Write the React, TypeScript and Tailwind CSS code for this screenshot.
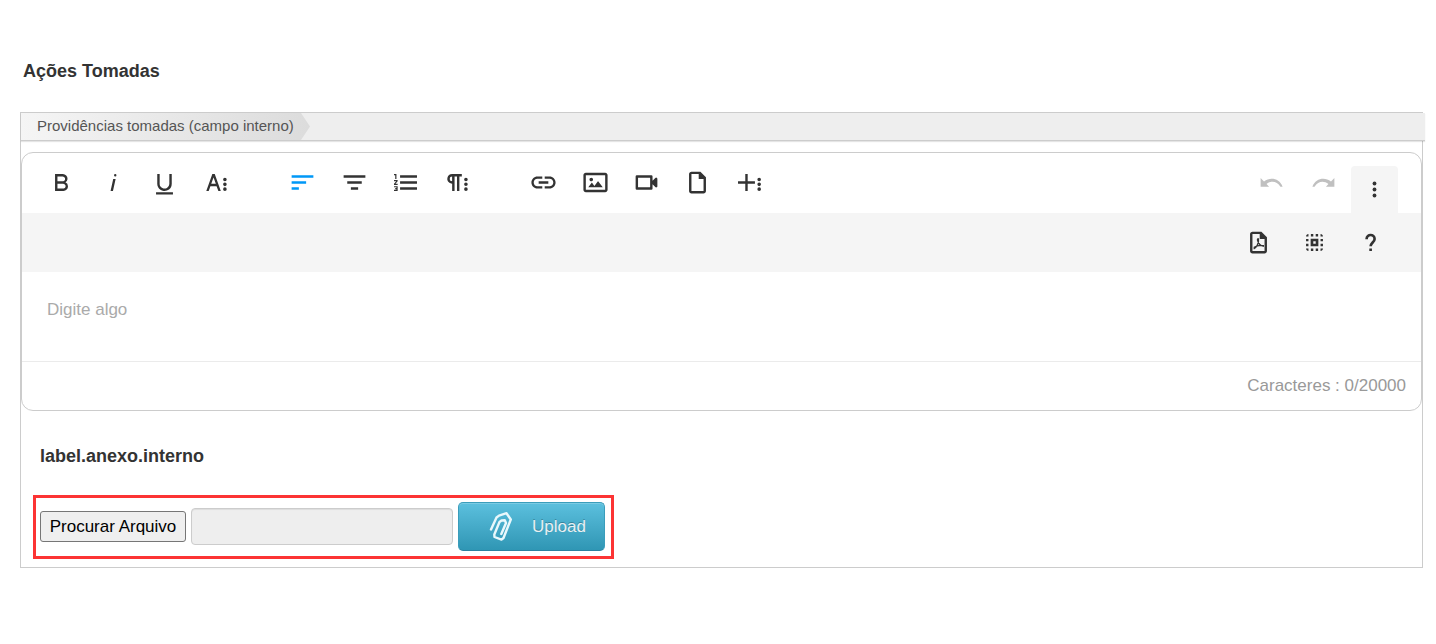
import type { ReactNode } from "react";

interface Tool {
  name: string;
  path: string;
  active?: boolean;
}

const TEXT_TOOLS: Tool[] = [
  { name: "Negrito", path: "M15.25,11.8h0A3.68,3.68,0,0,0,17,9a3.93,3.93,0,0,0-3.86-4H6.65V19h7a3.74,3.74,0,0,0,3.7-3.78V15.1A3.64,3.64,0,0,0,15.25,11.8ZM8.65,7h4.2a2.09,2.09,0,0,1,2,1.3,2.09,2.09,0,0,1-1.37,2.61,2.23,2.23,0,0,1-.63.09H8.65Zm4.6,10H8.65V13h4.6a2.09,2.09,0,0,1,2,1.3,2.09,2.09,0,0,1-1.37,2.61A2.23,2.23,0,0,1,13.25,17Z" },
  { name: "Itálico", path: "M11.76,9h2l-2.2,10h-2Zm1.68-4a1,1,0,1,0,1,1,1,1,0,0,0-1-1Z" },
  { name: "Sublinhado", path: "M19,20v2H5V20Zm-3-6.785a4,4,0,0,1-5.74,3.4A3.75,3.75,0,0,1,8,13.085V5.005H6v8.21a6,6,0,0,0,8,5.44,5.851,5.851,0,0,0,4-5.65v-8H16Z" },
  { name: "Mais texto", path: "M13.55,19h2l-5-14h-2l-5,14h2l1.4-4h5.1Zm-5.9-6,1.9-5.2,1.9,5.2Zm12.8,4.5a1.5,1.5,0,1,1-1.5-1.5A1.5,1.5,0,0,1,20.45,17.5Zm0-4a1.5,1.5,0,1,1-1.5-1.5A1.5,1.5,0,0,1,20.45,13.5Zm0-4A1.5,1.5,0,1,1,18.95,8,1.5,1.5,0,0,1,20.45,9.5Z" },
];

const PARAGRAPH_TOOLS: Tool[] = [
  { name: "Alinhar à esquerda", path: "M3,18h6v-2H3ZM3,6v2h18V6ZM3,13h12v-2H3Z", active: true },
  { name: "Centralizar", path: "M9,18h6v-2H9ZM6,13h12v-2H6ZM3,6v2h18V6Z" },
  { name: "Lista numerada", path: "M2.5,16h2v.5h-1v1h1V18h-2v1h3V15h-3Zm1-7h1V5h-2V6h1Zm-1,2H4.3L2.5,13.1V14h3V13H3.7l1.8-2.1V10h-3Zm5-5V8h14V6Zm0,12h14V16H7.5Zm0-5h14V11H7.5Z" },
  { name: "Mais parágrafo", path: "M7.682,5a4.11,4.11,0,0,0-4.07,3.18,4,4,0,0,0,3.11,4.725h0l.027.005a3.766,3.766,0,0,0,.82.09v6h2V7h2V19h2V7h2V5ZM5.532,9a2,2,0,0,1,2-2v4A2,2,0,0,1,5.532,9Zm14.94,8.491a1.5,1.5,0,1,1-1.5-1.5A1.5,1.5,0,0,1,20.472,17.491Zm0-4a1.5,1.5,0,1,1-1.5-1.5A1.5,1.5,0,0,1,20.472,13.491Zm0-4a1.5,1.5,0,1,1-1.5-1.5A1.5,1.5,0,0,1,20.472,9.491Z" },
];

const INSERT_TOOLS: Tool[] = [
  { name: "Inserir link", path: "M3.9 12c0-1.71 1.39-3.1 3.1-3.1h4V7H7c-2.76 0-5 2.24-5 5s2.24 5 5 5h4v-1.9H7c-1.71 0-3.1-1.39-3.1-3.1zM8 13h8v-2H8v2zm9-6h-4v1.9h4c1.71 0 3.1 1.39 3.1 3.1s-1.39 3.1-3.1 3.1h-4V17h4c2.76 0 5-2.24 5-5s-2.24-5-5-5z" },
  { name: "Inserir imagem", path: "M14.2,11l3.8,5H6l3-3.9l2.1,2.7L14,11H14.2z M8.5,11c0.8,0,1.5-0.7,1.5-1.5S9.3,8,8.5,8S7,8.7,7,9.5C7,10.3,7.7,11,8.5,11z M22,6v12c0,1.1-0.9,2-2,2H4c-1.1,0-2-0.9-2-2V6c0-1.1,0.9-2,2-2h16C21.1,4,22,4.9,22,6z M20,8.8V6H4v12h16V8.8z" },
  { name: "Inserir vídeo", path: "M15,8v8H5V8H15m2,2.5V7a1,1,0,0,0-1-1H4A1,1,0,0,0,3,7V17a1,1,0,0,0,1,1H16a1,1,0,0,0,1-1V13.5l2.29,2.29A1,1,0,0,0,21,15.08V8.91a1,1,0,0,0-1.71-.71Z" },
  { name: "Enviar arquivo", path: "M7,3C5.9,3,5,3.9,5,5v14c0,1.1,0.9,2,2,2h10c1.1,0,2-0.9,2-2V7.6L14.4,3H7z M17,19H7V5h6v4h4V19z" },
  { name: "Mais opções", path: "M16.5,13h-6v6h-2V13h-6V11h6V5h2v6h6Zm5,4.5A1.5,1.5,0,1,1,20,16,1.5,1.5,0,0,1,21.5,17.5Zm0-4A1.5,1.5,0,1,1,20,12,1.5,1.5,0,0,1,21.5,13.5Zm0-4A1.5,1.5,0,1,1,20,8,1.5,1.5,0,0,1,21.5,9.5Z" },
];

const HISTORY_TOOLS: Tool[] = [
  { name: "Desfazer", path: "M3 8.3V15.5H10L7.9 13.2C12 10.2 16.6 11 19.4 15.5H21.2C18.6 8.6 11 7.2 5.8 11.2Z" },
  { name: "Refazer", path: "M21 8.3V15.5H14L16.1 13.2C12 10.2 7.4 11 4.6 15.5H2.8C5.4 8.6 13 7.2 18.2 11.2Z" },
];

function Icon({ children }: { children: ReactNode }) {
  return (
    <svg viewBox="0 0 24 24" className="size-[29px]" fill="currentColor" aria-hidden="true">
      {children}
    </svg>
  );
}

function ToolButton({ tool, disabled }: { tool: Tool; disabled?: boolean }) {
  return (
    <button
      type="button"
      title={tool.name}
      aria-label={tool.name}
      disabled={disabled}
      className={`flex h-[47px] items-center justify-center disabled:text-[#c0c0c0] ${tool.active ? "text-[#0098f7]" : ""}`}
    >
      <Icon>
        <path d={tool.path} />
      </Icon>
    </button>
  );
}

function Toolbar() {
  return (
    <div className="text-[#333]" role="toolbar" aria-label="Formatação">
      <div className="flex justify-between pl-3.5 pr-[23px]">
        <div className="flex gap-[35px] pt-1.5">
          <div className="grid w-[206px] grid-cols-4">
            {TEXT_TOOLS.map((tool) => <ToolButton key={tool.name} tool={tool} />)}
          </div>
          <div className="grid w-[206px] grid-cols-4">
            {PARAGRAPH_TOOLS.map((tool) => <ToolButton key={tool.name} tool={tool} />)}
          </div>
          <div className="grid w-[257px] grid-cols-5">
            {INSERT_TOOLS.map((tool) => <ToolButton key={tool.name} tool={tool} />)}
          </div>
        </div>
        <div className="flex gap-0.5">
          <div className="grid w-[103px] grid-cols-2 pt-1.5">
            {HISTORY_TOOLS.map((tool) => <ToolButton key={tool.name} tool={tool} disabled />)}
          </div>
          <button type="button" aria-label="Mais" aria-expanded="true" className="mt-[13px] flex h-[47px] w-[47px] items-center justify-center rounded-t bg-[#f5f5f5]">
            <Icon>
              <circle cx="12" cy="7" r="1.6" />
              <circle cx="12" cy="12" r="1.6" />
              <circle cx="12" cy="17" r="1.6" />
            </Icon>
          </button>
        </div>
      </div>

      {/* Expanded row */}
      <div className="flex h-[59px] items-center justify-end gap-[27px] bg-[#f5f5f5] pr-9">
        <button type="button" aria-label="Exportar PDF">
          <Icon>
            <path d="M7,3C5.9,3,5,3.9,5,5v14c0,1.1,0.9,2,2,2h10c1.1,0,2-0.9,2-2V7.6L14.4,3H7z M17,19H7V5h6v4h4V19z" />
            <path d="M8 17.2C10 16.4 12.5 13 12 9.4C11.9 8.4 10.9 8.8 11.2 10.2C11.8 12.6 13.6 14.8 16.5 15.2M8 16.2C10.2 14.8 13.4 14 16.5 14.6" fill="none" stroke="currentColor" strokeWidth="1.1" />
          </Icon>
        </button>
        <button type="button" aria-label="Selecionar tudo">
          <Icon>
            <path
              fillRule="evenodd"
              d="M7 5v2H5C5 5.9 5.9 5 7 5zM9 5h2v2H9zM13 5h2v2h-2zM17 5c1.1 0 2 .9 2 2h-2zM5 9h2v2H5zM5 13h2v2H5zM17 9h2v2h-2zM17 13h2v2h-2zM5 17h2v2C5.9 19 5 18.100 5 17zM9 17h2v2H9zM13 17h2v2h-2zM17 17h2c0 1.100-.9 2-2 2zM8.800 8.800h6.400v6.400H8.800zM11 11v2h2v-2z"
            />
          </Icon>
        </button>
        <button type="button" aria-label="Ajuda">
          <Icon>
            <path d="M8.800 9.400V8.800C8.800 4.800 15.400 4.800 15.400 9C15.400 11.800 12.100 12.200 12.100 15.200" fill="none" stroke="currentColor" strokeWidth="2.200" />
            <path d="M11 16.900h2.200v2.200H11z" />
          </Icon>
        </button>
      </div>
    </div>
  );
}

function Editor() {
  return (
    <div className="mt-[11px] overflow-hidden rounded-xl border border-[#ccc]">
      <Toolbar />
      <textarea
        aria-label="Providências tomadas"
        placeholder="Digite algo"
        className="block h-[89px] w-full resize-none px-[25px] py-7 text-[17px] leading-5 outline-none placeholder:text-[#aaa]"
      />
      <div className="flex h-[49px] items-center justify-end border-t border-[#ebebeb] px-[15px] text-[17px] text-[#999]">
        Caracteres : 0/20000
      </div>
    </div>
  );
}

function UploadForm() {
  return (
    <form className="ml-3 flex h-16 w-fit items-start gap-[5px] border-[3px] border-[#fc3434] pt-1 pl-1 pr-[6px]">
      <button type="button" className="mt-[9px] h-[31px] w-[146px] rounded-[3px] border border-[#767676] bg-[#efefef] text-[17px] whitespace-nowrap text-black">
        Procurar Arquivo
      </button>
      <input
        type="text"
        aria-label="Arquivo selecionado"
        readOnly
        className="mt-1.5 h-[37px] w-[262px] rounded border border-[#ccc] bg-[#eee] px-2 shadow-[inset_0_1px_1px_rgba(0,0,0,0.075)]"
      />
      <button
        type="submit"
        className="flex h-[49px] w-[147px] items-center rounded-[5px] border border-[#3a9dbb] border-b-[#2b82a0] bg-linear-to-b from-[#5bc0de] to-[#2f96b4] pl-[27px] text-[17px] text-[#e8f0f2] shadow-[inset_0_1px_0_rgba(255,255,255,0.2)] [text-shadow:0_-1px_0_rgba(0,0,0,0.25)]"
      >
        <svg viewBox="0 0 28 32" className="h-8 w-7" fill="none" stroke="#e9f8fc" strokeWidth="2.4" strokeLinecap="round" strokeLinejoin="round" aria-hidden="true">
          <path d="M5 18.500L10.500 6.500L13 4.600L20.500 2.200L24.800 8.500L17.500 27L15.500 28.600L8.500 26L8.300 23.500L13.500 11L15.500 9.500L18.800 9.300L20 12L15.300 23" />
        </svg>
        <span className="ml-[18px]">Upload</span>
      </button>
    </form>
  );
}

export default function App() {
  return (
    <main className="bg-white pt-[60px] pr-[13px] pb-16 pl-5 font-['Liberation_Sans',Arial,sans-serif] text-[#333]">
      <h1 className="pl-[3px] text-lg leading-[22px] font-bold">Ações Tomadas</h1>
      <section className="mt-[30px] border border-[#ccc] pb-2">
        <nav aria-label="Seções" className="-mr-[3px] flex h-7 border-b border-[#ccc] bg-[#eee] shadow-[0_1px_1px_rgba(0,0,0,0.1)]">
          <span className="flex h-full w-[289px] items-center bg-linear-to-r from-[#f5f5f5] to-[#dcdcdc] pl-4 text-[15px] text-[#555] [clip-path:polygon(0_0,280px_0,100%_50%,280px_100%,0_100%)]">
            Providências tomadas (campo interno)
          </span>
        </nav>
        <Editor />
        <h2 className="mt-[34px] mb-[28px] pl-[19px] text-lg leading-[22px] font-bold">label.anexo.interno</h2>
        <UploadForm />
      </section>
    </main>
  );
}
